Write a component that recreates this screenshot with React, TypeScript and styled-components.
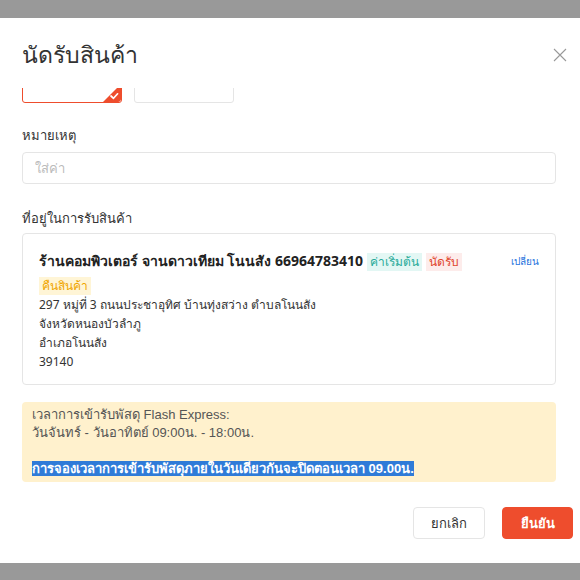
import React, { useLayoutEffect, useRef } from "react";
import styled, { createGlobalStyle } from "styled-components";

const Global = createGlobalStyle`
  html, body { margin: 0; padding: 0; background: #999999; }
  body { font-family: "Noto Sans", "Liberation Sans", sans-serif; color: #333; }
  * { box-sizing: border-box; }
`;

const Page = styled.div`
  height: 580px;
  padding-top: 18px;
  overflow: hidden;
`;

const Modal = styled.div`
  background: #fff;
  height: 545px;
  display: flex;
  flex-direction: column;
`;

const Header = styled.div`
  height: 70px;
  padding: 4px 11px 0 22px;
  display: flex;
  align-items: center;
  justify-content: space-between;
`;

const Title = styled.div`
  font-size: 23px;
  color: #333;
`;

const CloseBtn = styled.div`
  width: 18px;
  height: 18px;
  display: flex;
  align-items: center;
  justify-content: center;
`;

const Body = styled.div`
  height: 394px;
  overflow: hidden;
  padding: 0 24px 0 22px;
`;

const OptionRow = styled.div`
  display: flex;
  gap: 12px;
  margin-top: 40px;
`;

const Option = styled.div<{ $active?: boolean }>`
  position: relative;
  width: 100px;
  height: 40px;
  border: 1px solid ${(p) => (p.$active ? "#ee4d2d" : "#e5e5e5")};
  border-radius: 3px;
  font-size: 13px;
  padding: 8px 0 0 14px;
  overflow: hidden;
`;

const Tick = styled.div`
  position: absolute;
  right: 0;
  bottom: 0;
  width: 18px;
  height: 18px;
`;

const Label = styled.div<{ $gapTop: number; $gapBottom: number }>`
  font-size: 13px;
  line-height: 20px;
  color: #333;
  margin-top: ${(p) => p.$gapTop}px;
  margin-bottom: ${(p) => p.$gapBottom}px;
`;

const Input = styled.input`
  width: 100%;
  height: 32px;
  border: 1px solid #e5e5e5;
  border-radius: 4px;
  padding: 0 12px;
  font-size: 13px;
  font-family: inherit;
  outline: none;
  &::placeholder { color: #bbb; }
`;

const AddressCard = styled.div`
  height: 152px;
  border: 1px solid #e5e5e5;
  border-radius: 4px;
  padding: 15px 16px 0 16px;
  display: flex;
  gap: 12px;
`;

const AddressMain = styled.div`
  flex: 1;
`;

const NameLine = styled.div`
  font-size: 14px;
  line-height: 24px;
`;

const Name = styled.span`
  font-weight: bold;
  color: #222;
`;

const Tag = styled.span<{ $fg: string; $bg: string }>`
  display: inline-block;
  font-size: 12px;
  line-height: 18px;
  padding: 0 3px;
  margin-right: 4px;
  color: ${(p) => p.$fg};
  background: ${(p) => p.$bg};
  vertical-align: middle;
`;

const AddrLines = styled.div`
  margin-top: -2px;
  font-size: 12px;
  line-height: 19px;
  color: #333;
`;

const ChangeLink = styled.div`
  font-size: 10px;
  color: #2673dd;
  line-height: 24px;
  white-space: nowrap;
`;

const Notice = styled.div`
  margin-top: 17px;
  height: 80px;
  background: #fff1cd;
  border-radius: 4px;
  padding: 4px 10px;
  font-family: "Liberation Sans", Tahoma, sans-serif;
  font-size: 13px;
  line-height: 18px;
  color: #555;
`;

const Highlight = styled.span`
  background: #2f7bd8;
  color: #fff;
  font-weight: bold;
`;

const Footer = styled.div`
  display: flex;
  justify-content: flex-end;
  gap: 17px;
  padding: 25px 7px 0 0;
`;

const Button = styled.button<{ $primary?: boolean }>`
  height: 32px;
  width: ${(p) => (p.$primary ? 71 : 72)}px;
  border-radius: 4px;
  font-family: inherit;
  font-size: 13px;
  font-weight: ${(p) => (p.$primary ? "bold" : "normal")};
  border: 1px solid ${(p) => (p.$primary ? "#ee4d2d" : "#e5e5e5")};
  background: ${(p) => (p.$primary ? "#ee4d2d" : "#fff")};
  color: ${(p) => (p.$primary ? "#fff" : "#333")};
`;

export default function App() {
  const bodyRef = useRef<HTMLDivElement>(null);
  useLayoutEffect(() => {
    if (bodyRef.current) bodyRef.current.scrollTop = bodyRef.current.scrollHeight;
  }, []);
  return (
    <>
      <Global />
      <Page>
        <Modal>
          <Header>
            <Title>นัดรับสินค้า</Title>
            <CloseBtn>
              <svg width="14" height="14" viewBox="0 0 14 14">
                <path d="M1 1 L13 13 M13 1 L1 13" stroke="#999" strokeWidth="1.1" fill="none" />
              </svg>
            </CloseBtn>
          </Header>
          <Body ref={bodyRef}>
            <OptionRow>
              <Option $active>
                นัดรับ
                <Tick>
                  <svg width="18" height="18" viewBox="0 0 18 18">
                    <path d="M18 0 L18 15 Q18 18 15 18 L0 18 Z" fill="#ee4d2d" />
                    <path d="M8 12 L10.5 14.3 L14.6 9.8" stroke="#fff" strokeWidth="1.7" fill="none" strokeLinecap="round" strokeLinejoin="round" />
                  </svg>
                </Tick>
              </Option>
              <Option>ส่งเอง</Option>
            </OptionRow>
            <Label $gapTop={22} $gapBottom={7}>หมายเหตุ</Label>
            <Input placeholder="ใส่ค่า" />
            <Label $gapTop={24} $gapBottom={5}>ที่อยู่ในการรับสินค้า</Label>
            <AddressCard>
              <AddressMain>
                <NameLine>
                  <Name>ร้านคอมพิวเตอร์ จานดาวเทียม โนนสัง 66964783410</Name>{" "}
                  <Tag $fg="#26aa99" $bg="#e3f7f4">ค่าเริ่มต้น</Tag>
                  <Tag $fg="#e0452b" $bg="#fdeceb">นัดรับ</Tag>
                  <Tag $fg="#f0a500" $bg="#fff5d6">คืนสินค้า</Tag>
                </NameLine>
                <AddrLines>
                  <div>297 หมู่ที่ 3 ถนนประชาอุทิศ บ้านทุ่งสว่าง ตำบลโนนสัง</div>
                  <div>จังหวัดหนองบัวลำภู</div>
                  <div>อำเภอโนนสัง</div>
                  <div>39140</div>
                </AddrLines>
              </AddressMain>
              <ChangeLink>เปลี่ยน</ChangeLink>
            </AddressCard>
            <Notice>
              <div>เวลาการเข้ารับพัสดุ Flash Express:</div>
              <div>วันจันทร์ - วันอาทิตย์ 09:00น. - 18:00น.</div>
              <div>&nbsp;</div>
              <div>
                <Highlight>การจองเวลาการเข้ารับพัสดุภายในวันเดียวกันจะปิดตอนเวลา 09.00น.</Highlight>
              </div>
            </Notice>
          </Body>
          <Footer>
            <Button>ยกเลิก</Button>
            <Button $primary>ยืนยัน</Button>
          </Footer>
        </Modal>
      </Page>
    </>
  );
}
